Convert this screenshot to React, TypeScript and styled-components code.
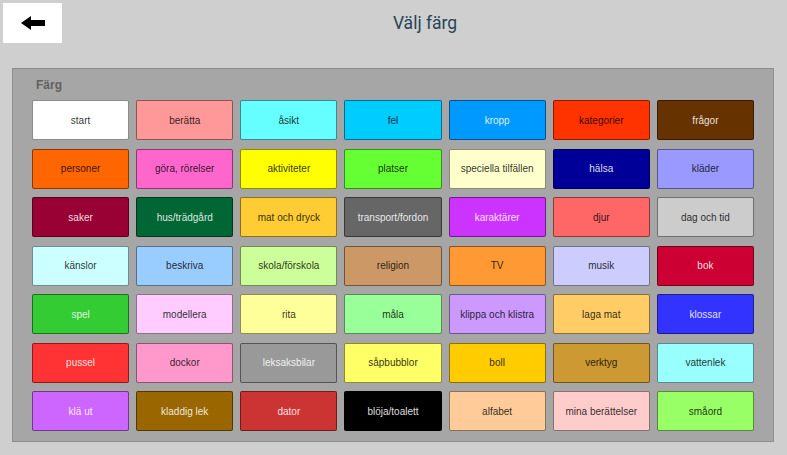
import styled, { createGlobalStyle } from "styled-components";

const GlobalStyle = createGlobalStyle`
  html, body {
    margin: 0;
    padding: 0;
    background: #cfcfcf;
    font-family: "Liberation Sans", Arial, sans-serif;
  }
`;

type Item = { label: string; bg: string; light?: boolean };

const items: Item[] = [
  { label: "start", bg: "#ffffff" },
  { label: "berätta", bg: "#ff9999" },
  { label: "åsikt", bg: "#66ffff" },
  { label: "fel", bg: "#00ccff" },
  { label: "kropp", bg: "#0099ff", light: true },
  { label: "kategorier", bg: "#ff3300" },
  { label: "frågor", bg: "#663300", light: true },

  { label: "personer", bg: "#ff6600" },
  { label: "göra, rörelser", bg: "#ff66cc" },
  { label: "aktiviteter", bg: "#ffff00" },
  { label: "platser", bg: "#66ff33" },
  { label: "speciella tilfällen", bg: "#ffffcc" },
  { label: "hälsa", bg: "#000099", light: true },
  { label: "kläder", bg: "#9999ff" },

  { label: "saker", bg: "#990033", light: true },
  { label: "hus/trädgård", bg: "#006633", light: true },
  { label: "mat och dryck", bg: "#ffcc33" },
  { label: "transport/fordon", bg: "#666666", light: true },
  { label: "karaktärer", bg: "#cc33ff", light: true },
  { label: "djur", bg: "#ff6666" },
  { label: "dag och tid", bg: "#cccccc" },

  { label: "känslor", bg: "#ccffff" },
  { label: "beskriva", bg: "#99ccff" },
  { label: "skola/förskola", bg: "#ccff99" },
  { label: "religion", bg: "#cc9966" },
  { label: "TV", bg: "#ff9933" },
  { label: "musik", bg: "#ccccff" },
  { label: "bok", bg: "#cc0033", light: true },

  { label: "spel", bg: "#33cc33", light: true },
  { label: "modellera", bg: "#ffccff" },
  { label: "rita", bg: "#ffff99" },
  { label: "måla", bg: "#99ff99" },
  { label: "klippa och klistra", bg: "#cc99ff" },
  { label: "laga mat", bg: "#ffcc66" },
  { label: "klossar", bg: "#3333ff", light: true },

  { label: "pussel", bg: "#ff3333", light: true },
  { label: "dockor", bg: "#ff99cc" },
  { label: "leksaksbilar", bg: "#999999", light: true },
  { label: "såpbubblor", bg: "#ffff66" },
  { label: "boll", bg: "#ffcc00" },
  { label: "verktyg", bg: "#cc9933" },
  { label: "vattenlek", bg: "#99ffff" },

  { label: "klä ut", bg: "#cc66ff", light: true },
  { label: "kladdig lek", bg: "#996600", light: true },
  { label: "dator", bg: "#cc3333", light: true },
  { label: "blöja/toalett", bg: "#000000", light: true },
  { label: "alfabet", bg: "#ffcc99" },
  { label: "mina berättelser", bg: "#ffcccc" },
  { label: "småord", bg: "#99ff66" },
];

const App = () => {
  return (
    <Page>
      <GlobalStyle />
      <Header>
        <BackButton aria-label="Tillbaka">
          <svg width="24" height="14" viewBox="0 0 24 14">
            <path d="M0 7 L10 0 L10 4 L24 4 L24 10 L10 10 L10 14 Z" fill="#000" />
          </svg>
        </BackButton>
        <Title>Välj färg</Title>
      </Header>
      <Panel>
        <PanelLabel>Färg</PanelLabel>
        <Grid>
          {items.map((it) => (
            <ColorButton key={it.label} bg={it.bg} light={it.light}>
              {it.label}
            </ColorButton>
          ))}
        </Grid>
      </Panel>
    </Page>
  );
};

export default App;

const Page = styled.div`
  width: 787px;
  height: 455px;
  background: #cfcfcf;
  overflow: hidden;
`;

const Header = styled.div`
  display: flex;
  align-items: center;
  height: 46px;
`;

const BackButton = styled.div`
  width: 59px;
  height: 40px;
  margin: 3px;
  background: #ffffff;
  display: flex;
  align-items: center;
  justify-content: center;
  border-radius: 1px;
`;

const Title = styled.div`
  flex: 1;
  text-align: center;
  font-family: Roboto, "Liberation Sans", sans-serif;
  font-size: 17.5px;
  color: #264457;
  padding-right: 2px;
  margin-top: -1px;
`;

const Panel = styled.div`
  margin: 22px 13px 0 12px;
  height: 374px;
  background: #a6a6a6;
  border: 1px solid #8e8e8e;
  padding: 9px 19px 0 19px;
  box-sizing: border-box;
`;

const PanelLabel = styled.div`
  font-size: 12px;
  line-height: 14px;
  font-weight: bold;
  color: #616161;
  margin: 0 0 8px 4px;
`;

const Grid = styled.div`
  display: grid;
  grid-template-columns: repeat(7, 1fr);
  grid-auto-rows: 40px;
  column-gap: 7px;
  row-gap: 8.5px;
`;

const ColorButton = styled.div<{ bg: string; light?: boolean }>`
  background: ${(p) => p.bg};
  border: 1px solid rgba(0, 0, 0, 0.45);
  border-radius: 2px;
  display: flex;
  align-items: center;
  justify-content: center;
  font-size: 10px;
  color: ${(p) => (p.light ? "rgba(255,255,255,0.88)" : "rgba(0,0,0,0.82)")};
  white-space: nowrap;
  box-sizing: border-box;
`;
